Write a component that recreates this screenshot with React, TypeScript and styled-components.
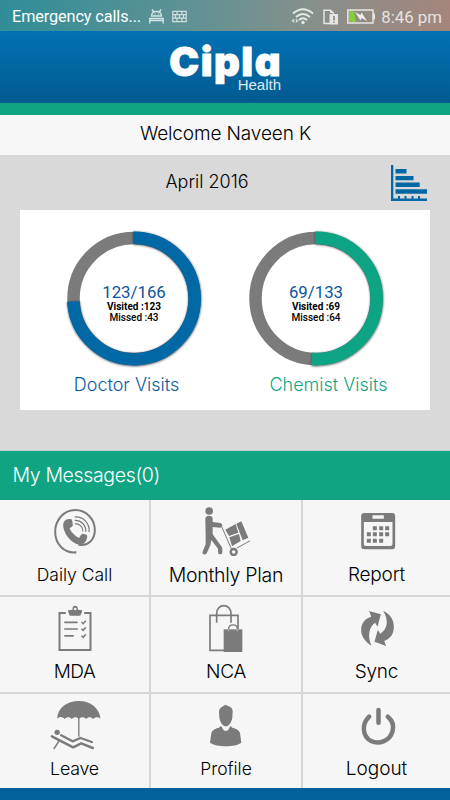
import React from "react";
import styled, { createGlobalStyle } from "styled-components";

const GlobalStyle = createGlobalStyle`
  *, *::before, *::after { box-sizing: border-box; }
  body { margin: 0; background: #f6f6f6; }
`;

const BLUE = "#0267a5";
const GREEN = "#10a483";
const GREY = "#7b7b7b";

const Screen = styled.main`
  width: 450px;
  height: 800px;
  display: flex;
  flex-direction: column;
  overflow: hidden;
  background: #f6f6f6;
  font-family: Inter, "Liberation Sans", sans-serif;
  font-weight: 300;
  color: #000;
`;

const StatusBar = styled.div`
  height: 31px;
  flex: none;
  display: flex;
  align-items: center;
  padding: 2px 8px 0 12px;
  background: linear-gradient(100deg, #2f8d97 0%, #5f9295 42%, #85908b 68%, #a5857b 100%);
  font-family: Roboto, sans-serif;
  font-weight: 400;
  color: #fff;
`;

const Carrier = styled.span`
  font-size: 16.3px;
  line-height: 29px;
  letter-spacing: -0.12px;
  width: 137px;
  white-space: nowrap;
`;

const StatusIcon = styled.svg<{ $gap: number }>`
  display: block;
  flex: none;
  margin-right: ${(p) => p.$gap}px;
`;

const Spacer = styled.div`
  flex: 1;
`;

const Clock = styled.span`
  font-size: 16.8px;
  line-height: 29px;
  padding-top: 1px;
  color: #e6e3e1;
  white-space: nowrap;
`;

const Brand = styled.header`
  height: 72px;
  flex: none;
  display: flex;
  justify-content: center;
  background: linear-gradient(#0271b4, #025b90);
  color: #fff;
`;

const Logo = styled.div`
  width: 114px;
  display: flex;
  flex-direction: column;
  align-items: flex-end;
`;

const LogoName = styled.span`
  height: 46px;
  font-size: 40px;
  line-height: 61px;
  font-weight: 900;
  letter-spacing: 1.5px;
  font-feature-settings: "cv11";
  -webkit-text-stroke: 0.9px #fff;
  white-space: nowrap;
`;

const LogoSub = styled.span`
  padding-right: 1px;
  font: 400 15px/16px "Liberation Sans", sans-serif;
  color: #dcebf5;
`;

const Stripe = styled.div`
  height: 12px;
  flex: none;
  background: ${GREEN};
`;

const Welcome = styled.div`
  height: 40px;
  flex: none;
  font-size: 19px;
  line-height: 38px;
  letter-spacing: -0.13px;
  padding-left: 1px;
  text-align: center;
  background: #f7f7f7;
`;

const Summary = styled.section`
  height: 296px;
  flex: none;
  padding: 0 20px;
  background: #d9d9d9;
  border-bottom: 1px solid #c9cfcd;
`;

const SummaryHead = styled.div`
  height: 55px;
  display: flex;
  align-items: flex-start;
  padding: 10px 3px 0;
`;

const Month = styled.h2`
  flex: 1;
  margin: 0;
  font-size: 18px;
  font-weight: 300;
  line-height: 34px;
  text-align: center;
`;

const Card = styled.div`
  height: 200px;
  display: flex;
  padding: 16px 39px 0 39px;
  justify-content: space-between;
  background: #fff;
`;

const Gauge = styled.div`
  width: 150px;
  display: flex;
  flex-direction: column;
  align-items: center;
`;

const Dial = styled.div`
  width: 150px;
  height: 146px;
  display: grid;
  place-items: center;
  > * { grid-area: 1 / 1; }
`;

const Figures = styled.div`
  display: flex;
  flex-direction: column;
  align-items: center;
  padding-top: 8px;
  font-family: Roboto, sans-serif;
  white-space: nowrap;
`;

const Ratio = styled.span`
  font-size: 16.8px;
  line-height: 17px;
  font-weight: 400;
  color: #0b559a;
`;

const Detail = styled.span<{ $bold?: boolean }>`
  font-size: 10px;
  line-height: 11px;
  font-weight: ${(p) => (p.$bold ? 700 : 500)};
`;

const GaugeName = styled.span<{ $color: string; $shift: number }>`
  margin-top: 2px;
  font-size: 18px;
  line-height: 22px;
  margin-left: ${(p) => p.$shift}px;
  color: ${(p) => p.$color};
  white-space: nowrap;
`;

const Messages = styled.div`
  height: 49px;
  flex: none;
  padding-left: 12.5px;
  font-size: 19.5px;
  letter-spacing: -0.35px;
  line-height: 49px;
  color: #fff;
  background: ${GREEN};
`;

const Menu = styled.nav`
  flex: none;
  height: 288px;
  display: grid;
  grid-template-columns: 151px 152px 147px;
  grid-template-rows: 97px 97px 94px;
`;

const Tile = styled.button`
  all: unset;
  box-sizing: border-box;
  display: flex;
  flex-direction: column;
  align-items: center;
  padding-top: 2px;
  border: 0 solid #d6d6d6;
  border-right-width: 2px;
  border-bottom-width: 2px;
  &:nth-child(3n) { border-right-width: 0; }
  &:nth-child(n + 7) { border-bottom-width: 0; }
`;

const TileLabel = styled.span<{ $size: number; $track: number }>`
  margin-top: 4px;
  font-size: ${(p) => p.$size}px;
  line-height: 30px;
  letter-spacing: ${(p) => p.$track}px;
  white-space: nowrap;
`;

const Footer = styled.div`
  flex: 1;
  background: #02609c;
`;

interface GaugeData {
  name: string;
  done: number;
  total: number;
  sweep: number;
  ring: string;
  color: string;
  shift: number;
}

const gauges: GaugeData[] = [
  { name: "Doctor Visits", done: 123, total: 166, sweep: 0.742, ring: BLUE, color: "#0b5ba3", shift: -15 },
  { name: "Chemist Visits", done: 69, total: 133, sweep: 0.511, ring: GREEN, color: GREEN, shift: 25 },
];

function Ring({ value, color }: { value: number; color: string }) {
  const a = value * Math.PI * 2;
  const r = 60.7;
  const d = `M-0.7 ${-r}A${r} ${r} 0 1 1 ${Math.sin(a) * r} ${-Math.cos(a) * r}`;
  return (
    <svg width="150" height="146" viewBox="-75 -72.5 150 146" fill="none">
      <defs>
        <filter id="arcShadow" x="-20%" y="-20%" width="140%" height="140%">
          <feDropShadow dx="0.2" dy="0.6" stdDeviation="1.1" floodColor="#000" floodOpacity="0.75" />
        </filter>
      </defs>
      <circle r="60.5" stroke={GREY} strokeWidth="12.5" />
      <path d={d} stroke={color} strokeWidth="12.5" filter="url(#arcShadow)" />
    </svg>
  );
}

const CallIcon = (
  <svg width="60" height="54" viewBox="133.5 6 180 162" fill="none" stroke={GREY}>
    <path d="M227 157C190 161 164 131 164 95C164 60 190 30 224 30C258 30 283 58 283 91C283 119 262 140 234 134" strokeWidth="6" />
    <path d="M224 153.500h3v7h-3z" fill={GREY} stroke="none" />
    <path d="M189 68C193 59 201 56 211 57C215 58 215 62 216 67L217 75C217 80 211 82 207 85C212 97 223 108 236 114C239 108 242 101 247 101L258 104C262 107 260 116 257 121C252 133 240 136 228 132C205 121 190 98 188 77C188 74 188 71 189 68Z" fill={GREY} stroke="none" />
    <path d="M223 51C247 49 268 69 266 96M223 61C242 60 257 76 256 95M223 71C237 71 248 81 247 94" strokeWidth="3.800" />
  </svg>
);

const PlanIcon = (
  <svg width="60" height="54" viewBox="138 6 180 162" fill="none" stroke={GREY} strokeLinecap="round">
    <circle cx="177.500" cy="33" r="11.500" fill={GREY} stroke="none" />
    <path d="M166 56C166 50 171 47 177 47C183 47 188 50 188 56V66L211 69Q218 71 217 77Q216 83 209 83L188 81V103L214 139Q217 143 217 148V155Q217 163 210 163Q204 163 204 155V146L184 120L181 136L171 158Q168 165 161 163Q155 160 159 152L167 133V104Z" fill={GREY} stroke="none" />
    <path d="M216 82L244 146M261 144L299 123" strokeWidth="3" />
    <circle cx="251" cy="156" r="9" strokeWidth="7" />
    <g fill={GREY} stroke="none">
      <path d="M226 89L257 72L265 98L237 108ZM238 112L267 102L272 123L246 139ZM259 71L274 64L295 113L278 121Z" />
    </g>
    <path d="M244 141L297 117" stroke="#f6f6f6" strokeWidth="1.500" />
  </svg>
);

const ReportIcon = (
  <svg width="60" height="54" viewBox="139.5 6 180 162" fill={GREY}>
    <path fillRule="evenodd" d="M191 39H275Q284 39 284 48V139Q284 148 275 148H191Q182 148 182 139V48Q182 39 191 39ZM190 66V132Q190 138 196 138H270Q276 138 276 132V66ZM216 46V56H250V46Z" />
    <path d="M217 79h12v12h-12zM236 79h12v12h-12zM254 79h12v12h-12zM199 97h12v12h-12zM217 97h12v12h-12zM236 97h12v12h-12zM254 97h12v12h-12zM199 116h12v12h-12zM217 116h12v12h-12zM236 116h12v12h-12z" />
  </svg>
);

const MdaIcon = (
  <svg width="60" height="54" viewBox="133.5 297 180 162" fill="none" stroke={GREY}>
    <path d="M196 339H177V450H270V339H251" strokeWidth="6" />
    <path fillRule="evenodd" d="M203 331L216 329Q215 317 224 317Q233 317 232 329L245 331V335L239 347H208L203 335ZM224 323A4 4 0 1 0 224 331A4 4 0 1 0 224 323Z" fill={GREY} stroke="none" />
    <path d="M193 367H230M193 387H230M193 407.500H218" strokeWidth="5" strokeLinecap="round" />
    <path d="M243 366L248 371L256 362M243 386L248 391L256 382M243 407L248 412L256 403" strokeWidth="4.500" />
  </svg>
);

const NcaIcon = (
  <svg width="60" height="54" viewBox="138 297 180 162" fill="none" stroke={GREY}>
    <path d="M264 388V346H180V451H224" strokeWidth="5" />
    <path d="M200 368V341C200 309 243 309 243 341V368" strokeWidth="5" />
    <path d="M221 388H277V456H221Z" fill={GREY} stroke="none" />
    <path d="M236 388V386C237 371 261 371 262 386V388" strokeWidth="4" />
    <path d="M236 388V394M262 388V394" stroke="#d8d8d8" strokeWidth="2" />
  </svg>
);

const SyncIcon = (
  <svg width="60" height="54" viewBox="139.5 297 180 162" fill={GREY}>
    <path d="M206 333L241 343L231 380L224 368C205 381 200 408 213 437C196 427 180 408 182 386C184 367 195 355 212 350Z" />
    <path d="M248 333C267 340 280 358 280 380C280 401 270 416 251 423L257 438L222 425L232 389L239 401C262 387 265 360 248 333Z" />
  </svg>
);

const LeaveIcon = (
  <svg width="60" height="54" viewBox="133.5 138 180 162" fill="none" stroke={GREY}>
    <path d="M170 206C172 173 199 153 235 153C270 153 297 174 300 206C293 200 285 200 278 207C271 200 263 200 257 207C250 200 242 200 235 207C229 200 221 200 214 207C207 200 200 200 192 207C186 200 178 199 170 206Z" fill={GREY} stroke="none" />
    <path d="M235 200V260" strokeWidth="4" />
    <circle cx="170" cy="247" r="8" fill={GREY} stroke="none" />
    <path d="M154 259L218 292L242 280L277 294" strokeWidth="7.500" strokeLinecap="round" strokeLinejoin="round" />
    <path d="M182 256L216 274L240 264L274 276" strokeWidth="7" strokeLinecap="round" strokeLinejoin="round" />
    <path d="M176 272L160 297" strokeWidth="4.500" />
  </svg>
);

const ProfileIcon = (
  <svg width="60" height="54" viewBox="138 138 180 162" fill={GREY}>
    <path d="M213 227L227 242L241 227L247 233C258 235 267 239 270 249L274 278C255 292 200 292 180 278L184 249C188 238 199 235 207 233Z" />
    <path d="M212 225L220 239Q227 246 235 239L243 225L235 229Q227 238 220 229Z" fill="#f6f6f6" />
    <path d="M227 164C232 169 248 168 248 184L247 203C244 218 236 229 228 229C219 229 211 218 208 203L207 184C208 173 218 169 227 164Z" />
  </svg>
);

const LogoutIcon = (
  <svg width="60" height="54" viewBox="139.5 138 180 162" fill="none" stroke={GREY} strokeWidth="13.500" strokeLinecap="round">
    <path d="M206 200C182 223 186 260 212 273C237 285 268 272 276 244C281 226 274 210 262 200" />
    <path d="M234 180V218" />
  </svg>
);

interface MenuEntry {
  label: string;
  size: number;
  track: number;
  icon: React.ReactElement;
}

const entries: MenuEntry[] = [
  { label: "Daily Call", size: 17.5, track: 0, icon: CallIcon },
  { label: "Monthly Plan", size: 19.5, track: -0.28, icon: PlanIcon },
  { label: "Report", size: 19, track: -0.2, icon: ReportIcon },
  { label: "MDA", size: 19, track: -0.5, icon: MdaIcon },
  { label: "NCA", size: 19, track: -0.2, icon: NcaIcon },
  { label: "Sync", size: 19, track: -0.2, icon: SyncIcon },
  { label: "Leave", size: 17.8, track: -0.2, icon: LeaveIcon },
  { label: "Profile", size: 17.5, track: 0, icon: ProfileIcon },
  { label: "Logout", size: 19, track: 0, icon: LogoutIcon },
];

export default function App() {
  return (
    <Screen>
      <GlobalStyle />
      <StatusBar>
        <Carrier>Emergency calls...</Carrier>
        <StatusIcon $gap={8} width="15" height="15" viewBox="0 0 15 15" fill="none" stroke="#d5e5e5" strokeWidth="1.400">
          <path d="M2.500 7C2.500 1 12.500 1 12.500 7ZM3 .5L4.700 3M12 .5L10.300 3M.8 14.500V9.500H14.200V14.500M.8 11.500H14.200M5.500 5.300h.8M8.900 5.300h.8" />
        </StatusIcon>
        <StatusIcon $gap={0} width="15" height="13" viewBox="0 0 15 13" fill="none" stroke="#d0dfde" strokeWidth="1.200">
          <path d="M.8 1.300H14.200V11.700H.8ZM1 4.700H14M1 8.200H14M5 1.500V4.700M10 1.500V4.700M3.500 4.700V8M7.500 4.700V8M11.500 4.700V8M5 8V11.500M10 8V11.500" />
        </StatusIcon>
        <Spacer />
        <StatusIcon $gap={9} width="23" height="17" viewBox="0 0 23 17" fill="none" stroke="#e6e8e5" strokeWidth="1.900">
          <path d="M2 5.500Q12 -3 22 5.500M5 9Q12 2.800 19 9M8 12Q12 8.400 16 12" />
          <circle cx="12" cy="14.500" r="1.700" fill="#e6e8e5" stroke="none" />
          <path d="M3.200 10.500V15L.3 12.700ZM4.800 10.500V15L7.700 12.700Z" fill="#d5dad7" stroke="none" />
        </StatusIcon>
        <StatusIcon $gap={8} width="16" height="16" viewBox="0 0 16 16" fill="none" stroke="#e6e5e2" strokeWidth="1.500">
          <path d="M7 14.500H1V1.200H7.300L10.500 4V5" />
          <path d="M6.500 5H15V15.500H6.500ZM7 1.200H8L10.500 4H7Z" fill="#e6e5e2" stroke="none" />
          <path d="M11 7V11.500M11 12.700V14" stroke="#8b8b84" strokeWidth="1.600" />
        </StatusIcon>
        <StatusIcon $gap={6} width="28" height="15" viewBox="0 0 28 15" fill="none">
          <path d="M.8 1H26V14H.8ZM27.200 4.500V10.500" stroke="#e6e5e2" strokeWidth="1.500" />
          <path d="M2 2H7L9 13H2Z" fill="#87cc3b" />
          <path d="M8 3L13.500 6L14.500 3.500L20 12L14.500 9L13.500 11.500Z" fill="#eeeeea" />
        </StatusIcon>
        <Clock>8:46 pm</Clock>
      </StatusBar>
      <Brand>
        <Logo>
          <LogoName>Cipla</LogoName>
          <LogoSub>Health</LogoSub>
        </Logo>
      </Brand>
      <Stripe />
      <Welcome>Welcome Naveen K</Welcome>
      <Summary>
        <SummaryHead>
          <Month>April 2016</Month>
          <svg width="36" height="36" viewBox="0 0 36 36" fill={BLUE}>
            <path d="M0 0H2.300V33.500H36V36H0ZM4.500 4H15.500V8.500H4.500ZM4.500 11H22.500V15.200H4.500ZM4.500 17.500H28.700V22H4.500ZM4.500 24.300H36V28.800H4.500ZM7 31H9V34H7ZM13.500 31H15.500V34H13.500ZM20.500 31H22.500V34H20.500ZM27 31H29V34H27Z" />
          </svg>
        </SummaryHead>
        <Card>
          {gauges.map((g) => (
            <Gauge key={g.name}>
              <Dial>
                <Ring value={g.sweep} color={g.ring} />
                <Figures>
                  <Ratio>{g.done}/{g.total}</Ratio>
                  <Detail $bold>Visited :{g.done}</Detail>
                  <Detail>Missed :{g.total - g.done}</Detail>
                </Figures>
              </Dial>
              <GaugeName $color={g.color} $shift={g.shift}>{g.name}</GaugeName>
            </Gauge>
          ))}
        </Card>
      </Summary>
      <Messages>My Messages(0)</Messages>
      <Menu>
        {entries.map((e) => (
          <Tile key={e.label}>
            {e.icon}
            <TileLabel $size={e.size} $track={e.track}>{e.label}</TileLabel>
          </Tile>
        ))}
      </Menu>
      <Footer />
    </Screen>
  );
}
